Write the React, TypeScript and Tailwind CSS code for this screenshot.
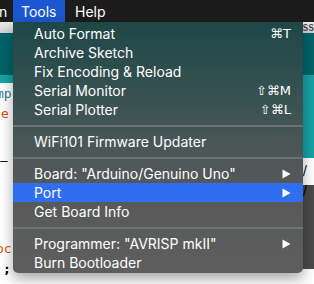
import React from "react";

const font = { fontFamily: "Inter, 'DejaVu Sans', sans-serif" };

type Item =
  | { kind: "item"; label: string; shortcut?: string; arrow?: boolean; active?: boolean }
  | { kind: "sep" };

const items: Item[] = [
  { kind: "item", label: "Auto Format", shortcut: "⌘T" },
  { kind: "item", label: "Archive Sketch" },
  { kind: "item", label: "Fix Encoding & Reload" },
  { kind: "item", label: "Serial Monitor", shortcut: "⇧⌘M" },
  { kind: "item", label: "Serial Plotter", shortcut: "⇧⌘L" },
  { kind: "sep" },
  { kind: "item", label: "WiFi101 Firmware Updater" },
  { kind: "sep" },
  { kind: "item", label: 'Board: "Arduino/Genuino Uno"', arrow: true },
  { kind: "item", label: "Port", arrow: true, active: true },
  { kind: "item", label: "Get Board Info" },
  { kind: "sep" },
  { kind: "item", label: 'Programmer: "AVRISP mkII"', arrow: true },
  { kind: "item", label: "Burn Bootloader" },
];

function Arrow() {
  return (
    <svg width="9" height="10" viewBox="0 0 9 10" className="shrink-0">
      <path d="M0.5 0.5 L8.5 5 L0.5 9.5 Z" fill="white" />
    </svg>
  );
}

export default function App() {
  return (
    <div className="relative w-[314px] h-[284px] overflow-hidden bg-white" style={font}>
      {/* background window */}
      <div className="flex flex-col w-full h-full">
        <div className="h-[22px] bg-[#1c1c1c] flex items-center text-white text-[14px] shrink-0">
          <span className="w-[14px] -ml-[1px] pl-0">n</span>
          <span className="h-full w-[52px] bg-[#1b57d0] flex items-center pl-[8px]">Tools</span>
          <span className="pl-[10px]">Help</span>
        </div>
        <div className="flex flex-1">
          <div className="w-[303px] flex flex-col">
            <div className="h-[11px] bg-[linear-gradient(180deg,#ececec,#cfcfcf)]" />
            <div className="h-[42px] bg-[#006468]" />
            <div className="h-[8px] bg-[#17a2a6]" />
            <div className="flex-1 bg-white relative text-[13px]" style={{ fontFamily: "'DejaVu Sans Mono', monospace" }}>
              <div className="absolute left-[-4px] top-[1px] text-[#1f8388]">mp</div>
              <div className="absolute left-[1px] top-[21px] text-[#d35400]">e</div>
              <div className="absolute left-[0px] top-[68px] text-black">—</div>
              <div className="absolute left-[-4px] top-[156px] text-[#d35400]">oc</div>
              <div className="absolute left-[3px] top-[176px] text-black font-bold">;</div>
            </div>
          </div>
          <div className="flex-1 flex flex-col">
            <div className="h-[11px] bg-[linear-gradient(180deg,#ececec,#cfcfcf)] text-[11px] leading-[11px] text-[#333] overflow-hidden pl-[1px]">ss</div>
            <div className="h-[42px] bg-[#006468]" />
            <div className="h-[83px] bg-[#17a2a6]" />
            <div className="h-[27px] bg-white relative text-[13px] text-black">
              <span className="absolute left-[1px] top-[3px]">/ /</span>
            </div>
            <div className="h-[84px] bg-[#4a4a4a] border-l border-[#666]" />
            <div className="flex-1 bg-white" />
          </div>
        </div>
      </div>

      {/* dropdown menu */}
      <div className="absolute left-[13px] top-[22px] w-[290px] pt-[2px] pb-[1px] rounded-b-[5px] text-white text-[14px] shadow-[0_6px_14px_rgba(0,0,0,0.35)] bg-[linear-gradient(180deg,#1e4747_0%,#345050_25%,#4b5656_50%,#585959_70%,#5e5e5e_100%)]">
        {items.map((it, i) =>
          it.kind === "sep" ? (
            <div key={i} className="h-[13px] flex items-center">
              <div className="h-[2px] w-full bg-[#737878]/80" />
            </div>
          ) : (
            <div
              key={i}
              className={`h-[19px] flex items-center pl-[21px] pr-[12px] ${it.active ? "bg-[#2f6ef0]" : ""}`}
            >
              <span className="flex-1 whitespace-nowrap">{it.label}</span>
              {it.shortcut && <span className="whitespace-nowrap" style={{ fontFamily: "'DejaVu Sans', sans-serif", fontSize: 13 }}>{it.shortcut}</span>}
              {it.arrow && <Arrow />}
            </div>
          )
        )}
      </div>
    </div>
  );
}
